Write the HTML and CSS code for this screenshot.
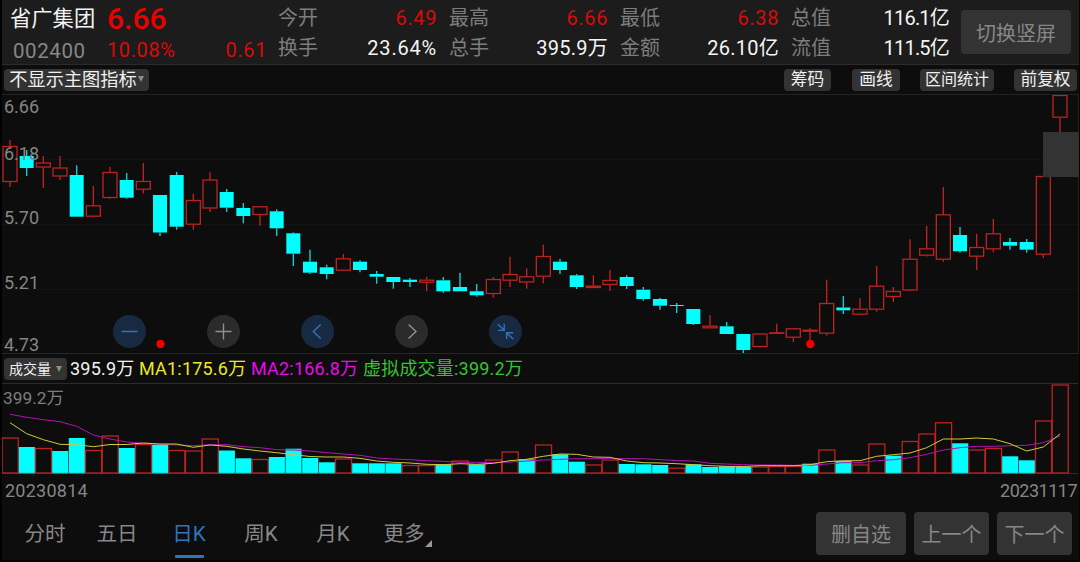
FILE: index.html
```
<!DOCTYPE html>
<html lang="zh-CN">

<head>
	<meta charset="UTF-8">
	<meta name="viewport" content="width=device-width, initial-scale=1.0">
	<title>省广集团 002400</title>
	<link rel="stylesheet" href="styles.css">
</head>

<body>
	<!--行情头部-->
	<div class="header">
		<div class="stock">
			<div class="stock__name">省广集团</div>
			<div class="stock__price">6.66</div>
			<div class="stock__code">002400</div>
			<div class="stock__change"><span>10.08%</span><span>0.61</span></div>
		</div>
		<div class="quote">
			<div class="quote__item"><span>今开</span><b class="red">6.49</b></div>
			<div class="quote__item"><span>换手</span><b>23.64%</b></div>
		</div>
		<div class="quote">
			<div class="quote__item"><span>最高</span><b class="red">6.66</b></div>
			<div class="quote__item"><span>总手</span><b class="unit">395.9万</b></div>
		</div>
		<div class="quote">
			<div class="quote__item"><span>最低</span><b class="red">6.38</b></div>
			<div class="quote__item"><span>金额</span><b class="unit">26.10亿</b></div>
		</div>
		<div class="quote">
			<div class="quote__item"><span>总值</span><b class="tight">116.1亿</b></div>
			<div class="quote__item"><span>流值</span><b class="tight">111.5亿</b></div>
		</div>
		<button class="header__switch">切换竖屏</button>
	</div>
	<!--工具栏-->
	<div class="toolbar">
		<button class="tag tag--main">不显示主图指标<i class="arrow"></i></button>
		<button class="tag tag--chip">筹码</button>
		<button class="tag tag--draw">画线</button>
		<button class="tag tag--range">区间统计</button>
		<button class="tag tag--right">前复权</button>
	</div>
	<!--K线-->
	<div class="chart">
		<svg id="kline" width="1076" height="258" viewBox="2 95 1076 258"></svg>
		<div class="chart__axis">
			<span>6.66</span>
			<span>6.18</span>
			<span>5.70</span>
			<span>5.21</span>
			<span>4.73</span>
		</div>
		<div class="chart__mask"></div>
		<div class="chart__tools">
			<svg class="tool tool--blue" viewBox="0 0 33 33"><path d="M8.5 16.5h16" /></svg>
			<svg class="tool" viewBox="0 0 33 33"><path d="M8.5 16.5h16M16.5 8.5v16" /></svg>
			<svg class="tool tool--blue" viewBox="0 0 33 33"><path d="M19.7 9.5l-7.4 7 7.4 7" /></svg>
			<svg class="tool" viewBox="0 0 33 33"><path d="M13.6 9.5l7.4 7-7.4 7" /></svg>
			<svg class="tool tool--blue" viewBox="0 0 33 33"><path d="M8.8 9.3l6.2 5.8M15.2 8.8v6.6H8.8M24.2 24l-6.6-6M17.6 24.3v-6.6h6.6" /></svg>
		</div>
	</div>
	<!--成交量-->
	<div class="legend">
		<button class="tag tag--volume">成交量<i class="arrow"></i></button>
		<span class="legend__now">395.9万</span>
		<span class="legend__ma1">MA1:175.6万</span>
		<span class="legend__ma2">MA2:166.8万</span>
		<span class="legend__virtual">虚拟成交量:399.2万</span>
	</div>
	<div class="volume">
		<svg id="volume" width="1076" height="91" viewBox="2 383 1076 91"></svg>
		<div class="volume__max">399.2万</div>
	</div>
	<div class="dates">
		<span>20230814</span>
		<span class="dates__end">20231117</span>
	</div>
	<!--底部-->
	<div class="footer">
		<div class="tabs">
			<a>分时</a>
			<a>五日</a>
			<a class="active">日K</a>
			<a>周K</a>
			<a>月K</a>
			<a class="more">更多</a>
		</div>
		<div class="actions">
			<button class="wide">删自选</button>
			<button>上一个</button>
			<button>下一个</button>
		</div>
	</div>
	<script src="chart.js"></script>
</body>

</html>
```
FILE: styles.css
```
* {
	margin: 0;
	padding: 0;
	box-sizing: border-box;
}

body {
	width: 1080px;
	height: 562px;
	padding: 0 1px 0 2px;
	overflow: hidden;
	background: #000;
	color: #f2f2f2;
	font-family: Roboto, "Noto Sans CJK SC", sans-serif;
}

button {
	border: 0;
	border-radius: 4px;
	background: #333;
	color: #878787;
	font-family: inherit;
	white-space: nowrap;
}

svg {
	display: block;
}

.header {
	display: flex;
	height: 65px;
	padding-left: 8px;
	background: #1c1c1c;
	border-bottom: 1px solid #2b2b2b;
}

.stock {
	display: grid;
	grid-template-columns: 97px 160px;
	grid-template-rows: 37px 28px;
	width: 268px;
	line-height: 38px;
}

.stock__name {
	font-size: 21.3px;
}

.stock__price {
	color: #eb0000;
	font-size: 30px;
	font-weight: 500;
}

.stock__code {
	padding-left: 3px;
	color: #878787;
	font-size: 20.5px;
	letter-spacing: 0.6px;
	line-height: 29px;
}

.stock__change {
	display: flex;
	justify-content: space-between;
	color: #d80b0b;
	font-size: 20px;
	letter-spacing: 0.6px;
	line-height: 26px;
}

.quote {
	width: 159px;
	margin-right: 12px;
	padding-top: 3px;
}

.quote__item {
	display: flex;
	justify-content: space-between;
	height: 30px;
	color: #7d7d7d;
	font-size: 20px;
	line-height: 31px;
}

.quote__item b {
	color: #f5f5f5;
	font-weight: 400;
	letter-spacing: 0.8px;
}

.quote__item b.red {
	color: #d80b0b;
	letter-spacing: 0.6px;
}

.quote__item b.unit {
	letter-spacing: 0.25px;
}

.quote__item b.tight {
	margin-right: 1px;
	letter-spacing: -0.8px;
}

.header__switch {
	width: 110px;
	height: 44px;
	margin: 10px 0 0 -1px;
	font-size: 20px;
}

.toolbar {
	display: flex;
	align-items: center;
	height: 30px;
	padding: 1px 2px 0 2px;
	background: #0d0d0d;
	border-bottom: 1px solid #222;
}

.tag {
	height: 22px;
	color: #f0f0f0;
	font-size: 16.7px;
	line-height: 22px;
}

.tag--main {
	width: 145px;
	margin-right: auto;
	font-size: 18.2px;
}

.tag--chip {
	width: 47px;
	margin-right: 21px;
}

.tag--draw {
	width: 48px;
	margin-right: 20px;
}

.tag--range {
	width: 74px;
	margin-right: 20px;
	font-size: 16px;
}

.tag--right {
	width: 63px;
}

.arrow {
	display: inline-block;
	margin-left: 1px;
	border: 3.5px solid transparent;
	border-top: 6px solid #8a8a8a;
	border-bottom: 0;
	vertical-align: 4px;
}

.chart {
	position: relative;
	height: 259px;
	background: #0d0d0d;
	border-right: 1px solid #222;
	border-bottom: 1px solid #262626;
}

.chart__axis {
	position: absolute;
	left: 2px;
	top: 1px;
	height: 258px;
	color: #858585;
	font-size: 18px;
	line-height: 22px;
}

.chart__axis span {
	display: block;
	height: 65px;
}

.chart__axis span:first-child {
	height: 47px;
}

.chart__axis span:nth-child(2) {
	height: 64px;
}

.chart__axis span:nth-child(4) {
	height: 62px;
}

.chart__mask {
	position: absolute;
	right: -1px;
	top: 37px;
	width: 36px;
	height: 45px;
	background: #333;
}

.chart__tools {
	position: absolute;
	left: 111px;
	top: 220px;
	display: flex;
	gap: 61px;
}

.tool {
	width: 33px;
	height: 33px;
	border-radius: 50%;
	background: #2b2b2b;
	fill: none;
	stroke: #909090;
	stroke-width: 1.4;
}

.tool--blue {
	background: #182a42;
	stroke: #3473ba;
}

.legend {
	display: flex;
	align-items: center;
	height: 29px;
	padding-left: 2px;
	background: #0d0d0d;
	font-size: 18px;
	letter-spacing: 0.2px;
	line-height: 29px;
	white-space: nowrap;
}

.tag--volume {
	width: 63px;
	margin-right: 3px;
	font-size: 14px;
}

.tag--volume .arrow {
	margin-left: 5px;
	vertical-align: 2px;
}

.legend__now {
	width: 69px;
}

.legend__ma1 {
	width: 112px;
	color: #ece62c;
}

.legend__ma2 {
	width: 112px;
	color: #e60ce6;
}

.legend__virtual {
	color: #35c435;
}

.volume {
	position: relative;
	height: 91px;
	background: #0d0d0d;
}

.volume__max {
	position: absolute;
	left: 1px;
	top: 4px;
	color: #7d7d7d;
	font-size: 17.3px;
	line-height: 22px;
}

.dates {
	display: flex;
	justify-content: space-between;
	height: 32px;
	padding: 0 2px 0 3px;
	background: #0d0d0d;
	color: #858585;
	font-size: 18px;
	letter-spacing: 0.25px;
	line-height: 33px;
}

.dates__end {
	letter-spacing: -0.5px;
}

.footer {
	display: flex;
	justify-content: space-between;
	height: 54px;
	padding: 6px 7px 0 22px;
	background: #0d0d0d;
}

.tabs {
	display: flex;
	color: #878787;
	font-size: 20.6px;
	line-height: 45px;
}

.tabs a {
	position: relative;
	width: 42px;
	margin-right: 30px;
	text-align: center;
	white-space: nowrap;
}

.tabs a.active {
	color: #2f74bd;
}

.tabs a.active::after {
	content: "";
	position: absolute;
	left: 7px;
	top: 43px;
	width: 29px;
	height: 3px;
	border-radius: 1px;
	background: #2f74bd;
}

.tabs a.more {
	left: -1px;
}

.tabs a.more::after {
	content: "";
	position: absolute;
	left: 42px;
	top: 28px;
	border-left: 7px solid transparent;
	border-bottom: 7px solid #999;
}

.actions {
	display: flex;
	gap: 8px;
}

.actions button {
	width: 75px;
	height: 43px;
	font-size: 20px;
}

.actions .wide {
	width: 90px;
}
```
FILE: chart.js
```
// 颜色, 最高, 实体上沿, 实体下沿, 最低
const candles = [
	['r', 140, 146, 182, 187], ['c', 150, 156, 168, 176], ['r', 156, 162.5, 167.5, 188], ['r', 156, 167.5, 176.5, 180],
	['c', 165.3, 175, 216.7, 216.7], ['r', 186, 205.3, 216.7, 216.7], ['r', 167, 172, 198, 198.7], ['c', 173, 180, 197.7, 198.7],
	['r', 163, 181, 189.7, 193.5], ['c', 195, 195, 232.5, 236], ['c', 172, 175, 226.7, 229.7], ['r', 193.7, 200, 224.7, 229.7],
	['r', 172.3, 179.5, 208.5, 212], ['c', 189, 192, 207.7, 212], ['c', 203, 208, 216, 223.3], ['r', 206.3, 206.3, 215, 225.7],
	['c', 209.3, 211.3, 228.3, 236], ['c', 232.3, 233.3, 253.7, 266], ['c', 249.7, 261.7, 272.7, 274], ['c', 264.7, 267.3, 274, 279.3],
	['r', 254, 258.3, 270.7, 271], ['c', 260.3, 261.7, 270, 272.3], ['c', 271, 274, 276.7, 283.7], ['c', 277, 277, 282, 288.7],
	['c', 278, 279.7, 282, 287], ['r', 277, 279.7, 282.7, 291.3], ['c', 277, 280.3, 291.3, 293], ['c', 272.7, 287, 291.3, 291.3],
	['c', 284, 291.3, 295.3, 296.7], ['r', 277, 279, 294, 297.7], ['r', 256.7, 274, 280.7, 287], ['r', 268.3, 276.3, 282.5, 288.7],
	['r', 244.7, 256, 276.7, 283.3], ['c', 259, 261.7, 270, 274], ['c', 274, 275.3, 287, 289], ['r', 275.3, 285.7, 288, 288],
	['r', 270, 280, 285, 291], ['c', 275.3, 277, 286, 289], ['c', 287, 289.7, 299, 300.7], ['c', 298, 299, 305.7, 309.7],
	['c', 303, 305, 306, 313], ['c', 309, 309, 324, 325], ['r', 315.3, 325.7, 328.3, 328.3], ['c', 322, 326.3, 334, 334],
	['c', 334, 334, 350, 353], ['r', 333.5, 333.5, 347, 347.5], ['r', 323.7, 332.3, 333.7, 333.7], ['r', 328.3, 328.3, 337.7, 342],
	['r', 328, 329.7, 331.7, 341], ['r', 279.7, 303, 333.7, 335.7], ['c', 296, 307.5, 310.3, 314], ['r', 298.3, 308.7, 314.7, 314.7],
	['r', 266, 285.7, 309.7, 311.7], ['r', 287, 291, 297, 302], ['r', 239.3, 258.7, 290.5, 291.3], ['r', 226, 248.3, 255.7, 256.5],
	['r', 187, 214.3, 259.7, 261.7], ['c', 227, 235, 251.3, 252.7], ['r', 233.7, 247, 256.7, 270], ['r', 219, 233.3, 249.3, 252.3],
	['c', 238, 242, 245.7, 249.7], ['c', 239, 242, 249.7, 252.7], ['r', 176, 176, 254.7, 258], ['r', 95, 95, 117.7, 140]
];

// 成交量柱: 颜色 + 上沿
const volumeColors = 'rcrccrrcrcrrrccrccccrcccrrcrcrrcrccrrcccrccccrrrcrcrrcrrrcrrccrr';
const volumeTops = [
	437.5, 447, 448, 451, 438, 450, 435.5, 448, 444, 444.7, 450, 450.5, 438.5, 450.5, 458.3, 459,
	457, 448.7, 458, 462.3, 458.5, 463.3, 463.3, 463.3, 465, 465, 464.3, 460.5, 464.3, 459.5, 451.5, 459.3,
	444.5, 454.3, 461.7, 464.5, 459.5, 464, 464.3, 465, 467.7, 464.3, 467, 466.3, 466.7, 466.5, 466, 466,
	463.7, 449.5, 461, 464.5, 443.5, 455.7, 441, 433.5, 422.3, 443.3, 449.5, 448, 456.3, 460.3, 420.5, 384.5
];

const ma1 = [
	422.7, 433.7, 439.7, 444.3, 444.7, 446.7, 444.5, 444.5, 443, 444, 444, 447.3, 445, 446.3, 449, 451,
	452.7, 454.7, 456.5, 457, 457, 458.3, 461, 462.3, 463, 464.3, 464.7, 463.7, 464.3, 463.3, 460.7, 459.3,
	456.3, 454, 454.3, 457, 457.3, 461, 462.7, 463, 463.7, 464.7, 465.7, 466.3, 466.5, 465.7, 465.7, 465.7,
	464.7, 461.7, 460.7, 460.7, 456.3, 454.7, 453, 447.7, 439, 439, 438, 439, 443.7, 451, 447, 434
];
const ma2 = [
	414.3, 417.3, 419.7, 421.7, 426.3, 435, 439, 442, 443.3, 444, 445, 445.7, 444.7, 444.7, 446.7, 447.7,
	449.7, 450, 451, 452.7, 454, 455.3, 458, 459, 459.7, 460.7, 461.3, 462.3, 462.3, 462.7, 462, 461,
	460, 459.3, 458.7, 458.7, 458.3, 458.7, 458.7, 459.7, 460.5, 461, 463.3, 464, 464.7, 465, 465, 465.3,
	465.3, 464, 462.7, 462.7, 460.7, 459.7, 457.7, 454.3, 450, 447.7, 446.3, 446.3, 445.7, 445.3, 442.7, 436
];

const STEP = 50 / 3;
const RED = '#bd2222';
const CYAN = '#00ffff';
const centerX = i => 10 + i * STEP;

function line(x1, y1, x2, y2, color, width = 1) {
	return `<path d="M${x1} ${y1}L${x2} ${y2}" stroke="${color}" stroke-width="${width}"/>`;
}

function box(x, top, width, bottom, color) {
	if (color === 'c') {
		return `<rect x="${x}" y="${top}" width="${width}" height="${bottom - top}" fill="${CYAN}"/>`;
	}
	return `<rect x="${x + 0.5}" y="${top + 0.5}" width="${width - 1}" height="${Math.max(bottom - top - 1, 0.5)}" fill="none" stroke="${RED}" stroke-width="1.3"/>`;
}

function drawKline() {
	let html = '';
	[159, 224, 289].forEach(y => {
		html += line(2, y + 0.5, 1078, y + 0.5, '#131313');
	});
	candles.forEach(([color, high, top, bottom, low], i) => {
		const x = centerX(i);
		const stroke = color === 'c' ? '#12cdcd' : RED;
		html += line(x, high, x, top, stroke, 1.4) + line(x, bottom, x, low, stroke, 1.4);
		html += color === 'c' ? box(x - 7, top, 14, bottom, color) : box(x - 7.5, top, 15, bottom, color);
	});
	[160.5, 810.3].forEach(x => {
		html += `<circle cx="${x}" cy="344" r="4.2" fill="#f00000"/>`;
	});
	document.getElementById('kline').innerHTML = html;
}

function drawVolume() {
	let html = line(2, 383.5, 1078, 383.5, '#2b2b2b') + line(2, 473.5, 1078, 473.5, '#2b2b2b');
	volumeTops.forEach((top, i) => {
		const x = centerX(i) - STEP / 2;
		if (volumeColors[i] === 'c') {
			html += box(x + 0.5, top, STEP - 0.6, 473, 'c');
			html += line(x, 473.3, x + STEP, 473.3, '#4a7777');
		} else {
			html += box(x, top, STEP + 0.4, 473.5, 'r');
		}
	});
	[[ma2, '#b512b5'], [ma1, '#cfc93c']].forEach(([data, color]) => {
		const points = data.map((y, i) => centerX(i) + ',' + y).join(' ');
		html += `<polyline points="${points}" fill="none" stroke="${color}"/>`;
	});
	document.getElementById('volume').innerHTML = html;
}

drawKline();
drawVolume();
```
